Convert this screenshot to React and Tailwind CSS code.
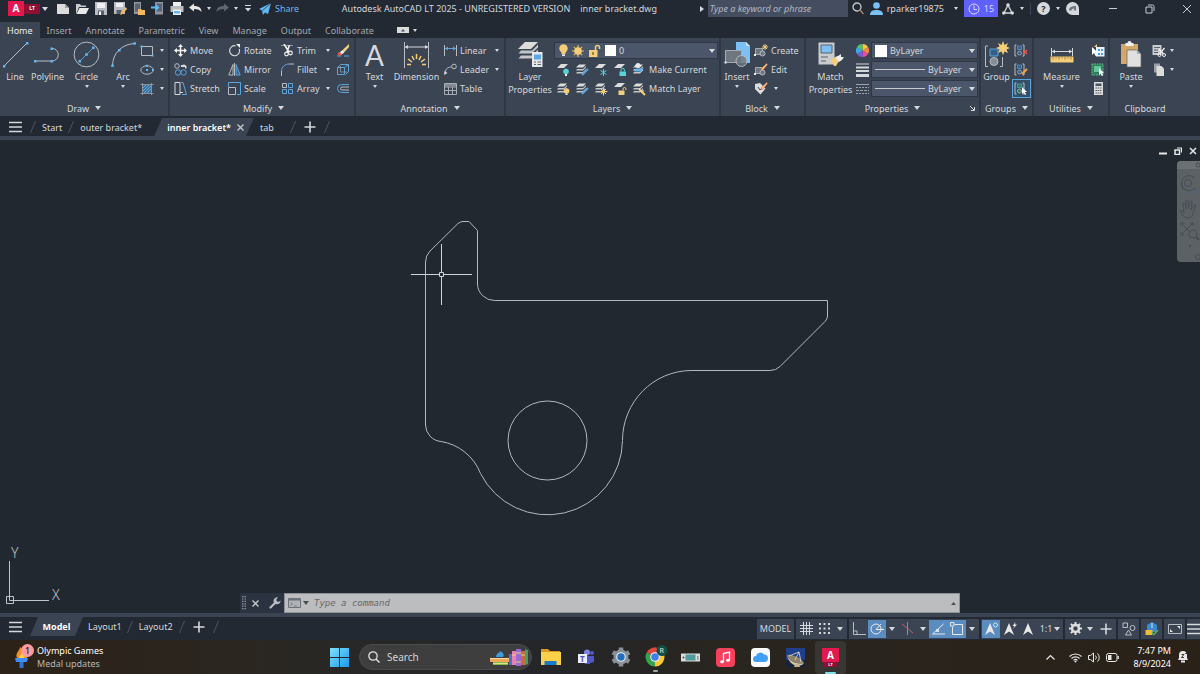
import { useState } from "react";

const Svg = ({ w, h, children, className = "" }) => (
  <svg width={w} height={h} viewBox={`0 0 ${w} ${h}`} fill="none" className={`shrink-0 ${className}`} aria-hidden="true">
    {children}
  </svg>
);

const Caret = ({ className = "" }) => (
  <Svg w={6} h={4} className={className}>
    <path d="M0 0h6L3 4z" fill="#d5d8dc" />
  </Svg>
);

const SmallCaret = ({ className = "" }) => (
  <Svg w={4} h={3} className={className}>
    <path d="M0 0h4L2 3z" fill="#d5d8dc" />
  </Svg>
);

const Slash = () => (
  <Svg w={6} h={14}>
    <path d="M0.5 13L5.5 1" stroke="#4a5462" />
  </Svg>
);

const Plus = () => (
  <Svg w={12} h={12}>
    <path d="M6 0.5v11M0.5 6h11" stroke="#d5d8dc" strokeWidth="1.6" />
  </Svg>
);

const Menu = () => (
  <Svg w={13} h={12}>
    <path d="M0 1.5h13M0 6h13M0 10.5h13" stroke="#d5d8dc" strokeWidth="1.6" />
  </Svg>
);

/* ---------- shared icon pieces ---------- */

const Sheets = ({ children }) => (
  <Svg w={14} h={14}>
    <path d="M4 1.5h7l-3 3H1z" fill="#dcdcda" />
    <path d="M2 6h6l3-3v1.5l-3 3H1zM2 9h6l3-3v1.5l-3 3H1z" fill="#c4c6c8" />
    {children}
  </Svg>
);

const Sheet = ({ children }) => (
  <Svg w={14} h={14}>
    <path d="M5 1h7L8 5H1z" fill="#dcdcda" />
    {children}
  </Svg>
);

const Bulb = ({ color = "#f5cd79" }) => (
  <Svg w={9} h={13}>
    <circle cx="4.5" cy="4.5" r="4.2" fill={color} />
    <path d="M2.5 7h4v3h-4z" fill={color} />
    <path d="M3 10.3h3V12H3z" fill="#e8e8e8" />
  </Svg>
);

const Sun = () => (
  <Svg w={12} h={12}>
    <path d="M6 0v12M0 6h12M1.8 1.8l8.4 8.4M10.2 1.8l-8.4 8.4" stroke="#e9b94f" strokeWidth="1.2" />
    <circle cx="6" cy="6" r="3.8" fill="#f5cd79" />
  </Svg>
);

const Unlock = () => (
  <Svg w={13} h={13}>
    <path d="M7.5 6V3.5a2 2 0 014 0V5" stroke="#f5cd79" strokeWidth="1.5" />
    <path d="M1 6h8.5v7H1z" fill="#f5cd79" />
    <path d="M5 8v3" stroke="#6b5a34" strokeWidth="1.3" />
  </Svg>
);

/* ---------- ribbon icons ---------- */

const LineIcon = () => (
  <Svg w={27} h={27}>
    <path d="M2 25L25 2" stroke="#b9bdc3" />
    <path d="M1 24h2.4v2.4H1zM24 1h2.4v2.4H24z" fill="#62b8f5" />
  </Svg>
);
const PolylineIcon = () => (
  <Svg w={27} h={27}>
    <path d="M1 20h17a6.3 6.3 0 000-12.6" stroke="#b9bdc3" />
    <path d="M0 19h2.4v2.4H0zM16.5 19h2.4v2.4h-2.4zM16.5 6.5h2.4v2.4h-2.4z" fill="#62b8f5" />
  </Svg>
);
const CircleIcon = () => (
  <Svg w={27} h={27}>
    <circle cx="13.5" cy="13.5" r="12.4" stroke="#b9bdc3" />
    <path d="M7 20L20 7" stroke="#4f9ed8" />
    <path d="M5.5 19h2.6v2.6H5.5zM12.2 12.2h2.6v2.6h-2.6zM19 5.5h2.6v2.6H19z" fill="#62b8f5" />
  </Svg>
);
const ArcIcon = () => (
  <Svg w={27} h={27}>
    <path d="M2.5 25C2.5 12 12 3 25 2.5" stroke="#b9bdc3" />
    <path d="M1.3 23.5h2.4v2.4H1.3zM8 8h2.6v2.6H8zM23.5 1.3h2.4v2.4h-2.4z" fill="#62b8f5" />
  </Svg>
);
const RectIcon = () => (
  <Svg w={14} h={12}>
    <path d="M1.5 1.5h11v9h-11z" stroke="#b9bdc3" />
    <path d="M0.5 0.5h2v2h-2zM11.5 9.5h2v2h-2z" fill="#62b8f5" />
  </Svg>
);
const EllipseIcon = () => (
  <Svg w={14} h={12}>
    <ellipse cx="7" cy="6" rx="6.2" ry="4.2" stroke="#b9bdc3" />
    <path d="M6 5h2v2H6zM12 5h2v2h-2zM6 0.8h2v2H6z" fill="#62b8f5" />
  </Svg>
);
const HatchIcon = () => (
  <Svg w={14} h={12}>
    <path d="M3 2h8v8H3z" fill="#3b6f9c" />
    <path d="M3 5l3-3M3 8l6-6M4 10l7-7M7 10l4-4" stroke="#7ec1f0" strokeWidth="0.7" />
    <path d="M2.5 0v12M11.5 0v12M0.5 1.5h13M0.5 10.5h13" stroke="#9da3ab" strokeWidth="0.8" />
  </Svg>
);

const MoveIcon = () => (
  <Svg w={13} h={13}>
    <path d="M6.5 1v11M1 6.5h11" stroke="#f0f0f0" strokeWidth="1.5" />
    <path d="M6.5 0l2.5 3h-5zM6.5 13l2.5-3h-5zM0 6.5l3-2.5v5zM13 6.5l-3-2.5v5z" fill="#f0f0f0" />
  </Svg>
);
const CopyIcon = () => (
  <Svg w={13} h={13}>
    <circle cx="3" cy="3" r="2.3" stroke="#b9bdc3" />
    <circle cx="4" cy="9.5" r="2.7" stroke="#5aa5dc" />
    <circle cx="9.6" cy="9.5" r="2.7" stroke="#5aa5dc" />
    <path d="M7 2h2.500V1L12.500 3v2.500H11V4H7z" fill="#d5d8dc" />
  </Svg>
);
const StretchIcon = () => (
  <Svg w={13} h={13}>
    <path d="M1 0.5h5v12H1z" stroke="#d5d8dc" />
    <path d="M6 10.5h3" stroke="#d5d8dc" />
    <path d="M7 0.5h2l3.5 12H8" stroke="#5aa5dc" />
  </Svg>
);
const RotateIcon = () => (
  <Svg w={13} h={13}>
    <path d="M7.5 1.8A5 5 0 1011.300 5" stroke="#d5d8dc" strokeWidth="1.2" />
    <path d="M8 0h4v4z" fill="#f0f0f0" />
  </Svg>
);
const MirrorIcon = () => (
  <Svg w={13} h={13}>
    <path d="M5 1.5v10.5H0.8z" stroke="#b9bdc3" />
    <path d="M8 1.5v10.5h4.2z" fill="#2b6a96" stroke="#5aa5dc" />
    <path d="M6.5 0v13" stroke="#d5d8dc" strokeWidth="0.8" />
  </Svg>
);
const ScaleIcon = () => (
  <Svg w={13} h={13}>
    <path d="M0.5 5V0.5h12v12H9" stroke="#5aa5dc" />
    <path d="M0.5 5.5h7v7h-7z" stroke="#b9bdc3" />
  </Svg>
);
const TrimIcon = () => (
  <Svg w={13} h={13}>
    <path d="M0 1.5h13" stroke="#8f96a0" strokeDasharray="3 1.5" />
    <path d="M3 0l5 8M8.5 1L6 8" stroke="#f0f0f0" strokeWidth="1.6" />
    <circle cx="5.5" cy="10" r="1.8" stroke="#f0f0f0" strokeWidth="1.2" />
    <circle cx="9.5" cy="9" r="1.8" stroke="#f0f0f0" strokeWidth="1.2" />
  </Svg>
);
const FilletIcon = () => (
  <Svg w={13} h={13}>
    <path d="M0.5 13V8" stroke="#b9bdc3" />
    <path d="M0.5 8C0.5 4 4 1 8 1" stroke="#5aa5dc" />
    <path d="M8 1h5" stroke="#b9bdc3" />
  </Svg>
);
const ArrayIcon = () => (
  <Svg w={13} h={13}>
    <path d="M7.5 1.5h4v4h-4zM1.5 7.5h4v4h-4zM7.5 7.5h4v4h-4z" stroke="#5aa5dc" />
    <path d="M1.5 1.5h4v4h-4z" stroke="#b9bdc3" />
  </Svg>
);
const EraseIcon = () => (
  <Svg w={14} h={13}>
    <path d="M13 0L5 7.5l2 2L13 3z" fill="#f5d38a" />
    <path d="M6 6.5l2 2L5 11 3 9z" fill="#f0f0f0" />
    <path d="M1 12h4M8 12h5" stroke="#5aa5dc" />
    <circle cx="3.5" cy="10" r="1.8" fill="#e8554d" />
  </Svg>
);
const ExplodeIcon = () => (
  <Svg w={14} h={13}>
    <path d="M1.5 4.5h7v7h-7z" stroke="#5aa5dc" />
    <path d="M1.5 4.5l3-3h8v7l-3 3M12.5 1.5l-4 3" stroke="#5aa5dc" />
    <path d="M4.5 3v6h7" stroke="#9da3ab" strokeWidth="0.7" />
  </Svg>
);
const OffsetIcon = () => (
  <Svg w={14} h={13}>
    <path d="M13 2.5H5.500a4 4 0 000 8H13" stroke="#5aa5dc" />
    <path d="M13 5H6a1.500 1.500 0 000 3h7" stroke="#b9bdc3" />
  </Svg>
);

const DimensionIcon = () => (
  <Svg w={27} h={27}>
    <path d="M1.5 1v26M25.5 1v26" stroke="#b9bdc3" />
    <path d="M2 6h23" stroke="#d5d8dc" />
    <path d="M2 6l3-2v4zM25 6l-3-2v4z" fill="#d5d8dc" />
    <path d="M13.5 13v5M9 15l2 4M18 15l-2 4M5 18l4 3M22 18l-4 3M4 23.5h4M19 23.5h4" stroke="#f5cd79" strokeWidth="1.5" />
  </Svg>
);
const LinearIcon = () => (
  <Svg w={13} h={13}>
    <path d="M0.5 1v11M12.5 1v11" stroke="#b9bdc3" />
    <path d="M1 4.5h11" stroke="#5aa5dc" />
    <path d="M1 4.5l3-2v4zM12 4.5l-3-2v4z" fill="#5aa5dc" />
  </Svg>
);
const LeaderIcon = () => (
  <Svg w={13} h={13}>
    <path d="M1 10c1-5 3-6 6.5-6" stroke="#b9bdc3" />
    <circle cx="10" cy="3.5" r="2.3" stroke="#b9bdc3" />
    <path d="M0 12l0.5-4L3.5 10z" fill="#d5d8dc" />
  </Svg>
);
const TableIcon = () => (
  <Svg w={13} h={12}>
    <path d="M0.5 0.5h12v11h-12zM0.5 4h12M0.5 7.5h12M4.5 4v7.5M8.5 4v7.5" stroke="#a8adb4" />
    <path d="M1 1h11v2.5H1z" fill="#858c96" />
  </Svg>
);
const LayerPropsIcon = () => (
  <Svg w={28} h={27}>
    <path d="M9 1h13l-7 7H2z" fill="#dcdcda" />
    <path d="M5 9.5h11l6-6v3l-6.5 6H2.5zM5 14.5h11l6-6v3l-6.5 6H2.5z" fill="#c4c6c8" />
    <path d="M16 11h10.5v15H16z" fill="#e8e8e8" />
    <path d="M18 13.5h7v5h-7z" fill="#5aa9e6" />
    <path d="M18 21h2M21.5 21H25M18 23.5h2M21.5 23.5H25" stroke="#5b6370" />
  </Svg>
);
const MatchMini = () => (
  <Sheets>
    <path d="M7 7l3 3 1.5-1.5" stroke="#e8e8e8" strokeWidth="1.5" />
    <path d="M8 8l5 5" stroke="#f5cd79" strokeWidth="2" />
  </Sheets>
);
const InsertIcon = () => (
  <Svg w={27} h={27}>
    <path d="M12 1h10l4 4v17H12z" fill="#7cc0f5" />
    <path d="M22 1v4h4z" fill="#c3e1f8" />
    <path d="M1.5 9.5h16v12h-16z" fill="#6f7680" stroke="#a5aab2" />
    <circle cx="17.5" cy="20" r="5.5" fill="#6f7680" fillOpacity="0.8" stroke="#b5bac1" />
    <path d="M0.5 20.5h2v2h-2z" fill="#f0f0f0" />
  </Svg>
);
const BlockMini = ({ children }) => (
  <Svg w={14} h={13}>
    <path d="M1.5 4.5h7v6h-7z" fill="#6f7680" stroke="#a5aab2" />
    <circle cx="8.5" cy="9.5" r="2.5" fill="#6f7680" stroke="#b5bac1" />
    <path d="M0 10h2v2H0z" fill="#f0f0f0" />
    {children}
  </Svg>
);
const Pencil = () => <path d="M12.5 0.5l1 1L9 7l-2 0.5L7.500 5.500z" fill="#f5cd79" stroke="#e8554d" strokeWidth="0.5" />;
const TagIcon = () => (
  <Svg w={14} h={13}>
    <path d="M1 2l5-1 5.5 5.5-5 6L1 7z" fill="#dcdcda" />
    <path d="M4 5l2 3 5-5" stroke="#3b4453" />
    <Pencil />
  </Svg>
);
const MatchPropsIcon = () => (
  <Svg w={27} h={27}>
    <path d="M1.5 1.5h16v22h-16z" fill="#c9cbcd" />
    <path d="M4 4h11v8H4z" fill="#7cc0f5" stroke="#54606e" />
    <path d="M4 16h7M4 20h5" stroke="#54606e" />
    <path d="M14 19l4-3 4 4-3 5h-2z" fill="#f5cd79" />
    <path d="M18 16l3-1 3-2v3h3l-2 3-3 2z" fill="#f0f0f0" />
  </Svg>
);
const WheelIcon = () => (
  <Svg w={13} h={13}>
    <path d="M6.5 6.5V0A6.5 6.5 0 0112.1 3.2z" fill="#f6c945" />
    <path d="M6.5 6.5l5.6-3.3a6.5 6.5 0 010 6.6z" fill="#f08a3c" />
    <path d="M6.5 6.5l5.6 3.3A6.5 6.5 0 016.5 13z" fill="#e0529c" />
    <path d="M6.5 6.5V13A6.5 6.5 0 010.9 9.8z" fill="#7a5be0" />
    <path d="M6.5 6.5L0.9 9.8a6.5 6.5 0 010-6.6z" fill="#3fa9e8" />
    <path d="M6.5 6.5L0.9 3.2A6.5 6.5 0 016.5 0z" fill="#58c06a" />
  </Svg>
);
const WeightIcon = () => (
  <Svg w={13} h={14}>
    <path d="M0 1h13" stroke="#d5d8dc" />
    <path d="M0 4.5h13" stroke="#d5d8dc" strokeWidth="2" />
    <path d="M0 8h13" stroke="#d5d8dc" strokeWidth="2" />
    <path d="M0 12.5h13" stroke="#d5d8dc" strokeWidth="3" />
  </Svg>
);
const LinetypeIcon = () => (
  <Svg w={13} h={13}>
    <path d="M0 2.5h13" stroke="#b9bdc3" strokeWidth="0.8" />
    <path d="M0 5.5h13M0 11.5h13" stroke="#9da3ab" strokeDasharray="2 1" />
    <path d="M0 8.5h13" stroke="#9da3ab" strokeDasharray="3 1" />
  </Svg>
);
const GroupIcon = () => (
  <Svg w={26} h={27}>
    <path d="M4 5H1.5v20.5H4M16 25.5h2.5V16" stroke="#b9bdc3" />
    <path d="M6 8h8v7H6z" fill="#33608a" stroke="#5aa5dc" />
    <circle cx="10" cy="20.5" r="4" fill="#858c96" stroke="#b9bdc3" />
    <path d="M19 0l1.500 4L24 2l-1.500 3.500L26 7l-3.500 1.500L24 12l-3.500-1.500L19 14l-1.500-3.500L14 12l1.500-3.500L12 7l3.500-1.500L14 2l3.500 2z" fill="#f5cd79" />
  </Svg>
);
const GroupMini = ({ color = "#33608a", children }) => (
  <Svg w={14} h={13}>
    <path d="M2.5 1H1v11h1.5M8.5 1H10v11H8.5" stroke="#b9bdc3" />
    <path d="M3.5 2h4v3.500h-4z" fill={color} stroke="#5aa5dc" strokeWidth="0.7" />
    <circle cx="5.5" cy="9" r="2" fill={color} stroke="#b9bdc3" strokeWidth="0.7" />
    {children}
  </Svg>
);
const MeasureIcon = () => (
  <Svg w={24} h={27}>
    <path d="M1.5 7v8M22.5 7v8M2 10.5h20" stroke="#d5d8dc" />
    <path d="M2 10.5l3-2v4zM22 10.5l-3-2v4z" fill="#d5d8dc" />
    <path d="M0.5 15.500h23v6h-23z" fill="#f5cd79" />
    <path d="M3 15.500v3M6 15.500v2M9 15.500v3M12 15.500v2M15 15.500v3M18 15.500v2M21 15.500v3" stroke="#8b6e35" strokeWidth="0.8" />
  </Svg>
);
const SelectIcon = () => (
  <Svg w={14} h={13}>
    <path d="M5 3h8.500v9.500H5z" fill="#e8f1f8" />
    <path d="M7 5h2v2H7zM10 5h2v2h-2zM7 9h2v2H7zM10 9h2v2h-2z" fill="#4a9fe0" />
    <path d="M1 3v8l2-2 1.500 3 1.500-0.800-1.500-2.500H7z" fill="#fff" />
    <path d="M6 0L3 3h3z" fill="#f5cd79" />
  </Svg>
);
const SelectAllIcon = () => (
  <Svg w={14} h={13}>
    <path d="M1 1h11v11H1z" fill="#2e7d58" stroke="#67c498" strokeDasharray="1.5 1" />
    <path d="M3 3h7v6H3z" fill="#67c498" />
    <path d="M8 5v7l1.600-1.500 1.300 2.500 1.300-0.700-1.300-2.400h2.100z" fill="#fff" />
  </Svg>
);
const CalcIcon = () => (
  <Svg w={11} h={13}>
    <path d="M1 0h9v13H1z" fill="#dcdcda" />
    <path d="M2.5 1.5h6v2.5h-6z" fill="#4a5462" />
    <path d="M2.5 6h6M2.5 8.5h6M2.5 11h6" stroke="#4a5462" strokeDasharray="1.5 0.7" />
  </Svg>
);
const PasteIcon = () => (
  <Svg w={22} h={27}>
    <path d="M1 3h17v20H1z" fill="#d4a66a" />
    <path d="M5.5 2h2a2 2 0 014 0h2v3h-8z" fill="#f0f0f0" />
    <path d="M7 9h10l4 4v13H7z" fill="#dfe0e0" stroke="#6b6258" strokeWidth="0.7" />
    <path d="M17 9v4h4z" fill="#a5aab2" />
  </Svg>
);
const CutIcon = () => (
  <Svg w={14} h={13}>
    <path d="M0.5 1h9v10h-9z" fill="#c9cbcd" />
    <path d="M2 3.5h6M2 6h4M2 8.5h4" stroke="#5b6370" />
    <path d="M12.5 4L8 9.500M7 5l4.500 5" stroke="#f0f0f0" strokeWidth="1.3" />
    <circle cx="7.5" cy="11" r="1.5" stroke="#f0f0f0" />
    <circle cx="12" cy="11" r="1.5" stroke="#f0f0f0" />
  </Svg>
);
const ClipCopyIcon = () => (
  <Svg w={14} h={13}>
    <path d="M2 0.5h6v9H2z" fill="#9ba0a8" />
    <path d="M4.5 3h5l2.5 2.5V13H4.500z" fill="#dcdcda" />
  </Svg>
);

/* ---------- ribbon building blocks ---------- */

const Panel = ({ title, className = "", launcher = false, children }) => (
  <section className={`shrink-0 flex flex-col border-r-2 border-[#2f3744] ${className}`}>
    <div className="flex h-[60px] pt-[3px]">{children}</div>
    <div className="relative h-[18px] flex items-center justify-center gap-1.5 pt-0.5">
      <span>{title}</span>
      <Caret />
      {launcher && (
        <Svg w={5} h={5} className="absolute right-1 top-2">
          <path d="M0 0l4 4M4.5 1v3.5H1" stroke="#d5d8dc" />
        </Svg>
      )}
    </div>
  </section>
);

const BigButton = ({ icon, label, caret, className = "" }) => (
  <button className={`shrink-0 flex flex-col items-center h-[57px] whitespace-pre-line ${className}`}>
    <span className="h-[29px] flex items-start justify-center">{icon}</span>
    <span className="leading-[13px] text-center">{label}</span>
    {caret && <SmallCaret className="mt-0.5" />}
  </button>
);

const Tool = ({ icon, label, caret, title, className = "" }) => (
  <button aria-label={label || title} className={`h-[19px] flex items-center gap-[3px] ${className}`}>
    <span className="w-[14px] flex justify-center">{icon}</span>
    {label && <span>{label}</span>}
    {caret && <SmallCaret className="ml-auto" />}
  </button>
);

const Combo = ({ label, value, icons, className = "" }) => (
  <label className={`relative flex items-center h-[17px] bg-[#4b566a] border border-[#2f3744] ${className}`}>
    {icons}
    <select aria-label={label} className="appearance-none bg-transparent flex-1 min-w-0 h-full pl-[3px] outline-none">
      <option>{value}</option>
    </select>
    <Caret className="absolute right-0.5 top-1.5 pointer-events-none" />
  </label>
);

const Ribbon = () => (
  <div className="flex bg-[#3b4453] h-[78px]">
    <Panel title="Draw" className="w-[170px]">
      <BigButton icon={<LineIcon />} label="Line" className="w-[30px]" />
      <BigButton icon={<PolylineIcon />} label="Polyline" className="w-[35px]" />
      <BigButton icon={<CircleIcon />} label="Circle" caret className="w-[43px]" />
      <BigButton icon={<ArcIcon />} label="Arc" caret className="w-[30px]" />
      <div className="flex flex-col w-[24px] ml-0.5">
        <Tool icon={<RectIcon />} title="Rectangle" caret />
        <Tool icon={<EllipseIcon />} title="Ellipse" caret />
        <Tool icon={<HatchIcon />} title="Hatch" caret />
      </div>
    </Panel>

    <Panel title="Modify" className="w-[186px] pl-[3px]">
      <div className="w-[54px]">
        <Tool icon={<MoveIcon />} label="Move" />
        <Tool icon={<CopyIcon />} label="Copy" />
        <Tool icon={<StretchIcon />} label="Stretch" />
      </div>
      <div className="w-[53px]">
        <Tool icon={<RotateIcon />} label="Rotate" />
        <Tool icon={<MirrorIcon />} label="Mirror" />
        <Tool icon={<ScaleIcon />} label="Scale" />
      </div>
      <div className="w-[50px]">
        <Tool icon={<TrimIcon />} label="Trim" caret className="w-full" />
        <Tool icon={<FilletIcon />} label="Fillet" caret className="w-full" />
        <Tool icon={<ArrayIcon />} label="Array" caret className="w-full" />
      </div>
      <div className="ml-1.5">
        <Tool icon={<EraseIcon />} title="Erase" />
        <Tool icon={<ExplodeIcon />} title="Explode" />
        <Tool icon={<OffsetIcon />} title="Offset" />
      </div>
    </Panel>

    <Panel title="Annotation" className="w-[150px]">
      <BigButton
        icon={<span className="font-['Lato',sans-serif] text-[28px] leading-[29px]">A</span>}
        label="Text"
        caret
        className="w-[37px]"
      />
      <BigButton icon={<DimensionIcon />} label="Dimension" className="w-[47px]" />
      <div className="w-[56px] ml-[3px]">
        <Tool icon={<LinearIcon />} label="Linear" caret className="w-full" />
        <Tool icon={<LeaderIcon />} label="Leader" caret className="w-full" />
        <Tool icon={<TableIcon />} label="Table" />
      </div>
    </Panel>

    <Panel title="Layers" className="w-[215px]">
      <BigButton icon={<LayerPropsIcon />} label={"Layer\nProperties"} className="w-[48px]" />
      <div className="w-[164px]">
        <div className="h-[19px] flex items-center">
          <Combo
            label="Layer"
            value="0"
            className="w-full"
            icons={
              <span className="flex items-center gap-1 pl-1">
                <Bulb />
                <Sun />
                <Unlock />
                <span className="w-[11px] h-[11px] bg-white" />
              </span>
            }
          />
        </div>
        <div className="flex gap-[5px] pl-0.5">
          <Tool title="Off" icon={<Sheet><circle cx="10" cy="8.5" r="2.8" fill="#58d3d8" /><path d="M9 11h2v2H9z" fill="#eee" /></Sheet>} />
          <Tool title="Isolate" icon={<Sheets><path d="M7 12l6-6" stroke="#5aa5dc" strokeWidth="2" /></Sheets>} />
          <Tool title="Freeze" icon={<Sheet><path d="M9.5 6v7M6.5 7.5l6 4M12.5 7.5l-6 4" stroke="#58d3d8" /></Sheet>} />
          <Tool title="Lock" icon={<Sheet><path d="M6.5 8.5h6.5V13H6.500z" fill="#58d3d8" /><path d="M8 8.5V7a1.700 1.700 0 013.400 0v1.500" stroke="#58d3d8" /></Sheet>} />
          <Tool
            icon={<Sheets><circle cx="6" cy="2.5" r="2.5" fill="#e8e8e8" /><path d="M4 5.500h8l-3 3H2z" fill="#62b8f5" /></Sheets>}
            label="Make Current"
          />
        </div>
        <div className="flex gap-[5px] pl-0.5">
          <Tool title="Turn All On" icon={<Sheets><circle cx="10.5" cy="9" r="2.8" fill="#f5cd79" /><path d="M9.5 11.5h2V13h-2z" fill="#eee" /></Sheets>} />
          <Tool title="Unisolate" icon={<Sheets><path d="M7 12l6-6" stroke="#5aa5dc" strokeWidth="2" /></Sheets>} />
          <Tool title="Thaw All" icon={<Sheets><path d="M9.5 5.5v8M5.5 9.5h8M7 7l5 5M12 7l-5 5" stroke="#f5cd79" /><circle cx="9.5" cy="9.5" r="2" fill="#f5cd79" /></Sheets>} />
          <Tool title="Unlock" icon={<Sheet><path d="M5.5 8.5h6V13h-6z" fill="#f5cd79" /><path d="M10 8.5V7a1.500 1.500 0 013 0v1" stroke="#f5cd79" /></Sheet>} />
          <Tool icon={<MatchMini />} label="Match Layer" />
        </div>
      </div>
    </Panel>

    <Panel title="Block" className="w-[85px]">
      <BigButton icon={<InsertIcon />} label="Insert" caret className="w-[32px]" />
      <div className="ml-px">
        <Tool icon={<BlockMini><path d="M11 0v6M8 3h6M9 1l4 4M13 1l-4 4" stroke="#f5cd79" /></BlockMini>} label="Create" />
        <Tool icon={<BlockMini><Pencil /></BlockMini>} label="Edit" />
        <Tool icon={<TagIcon />} title="Edit Attributes" caret className="w-[24px]" />
      </div>
    </Panel>

    <Panel title="Properties" launcher className="w-[175px]">
      <BigButton icon={<MatchPropsIcon />} label={"Match\nProperties"} className="w-[49px]" />
      <div className="w-[16px]">
        <Tool icon={<WheelIcon />} title="Object color" />
        <Tool icon={<WeightIcon />} title="Lineweight" />
        <Tool icon={<LinetypeIcon />} title="Linetype" />
      </div>
      <div className="flex flex-col gap-0.5 w-[107px] pt-px">
        <Combo label="Color" value="ByLayer" icons={<span className="w-[12px] h-[12px] bg-white ml-[3px]" />} />
        <Combo label="Lineweight list" value="ByLayer" icons={<span className="w-[50px] h-px bg-[#c9cbcd] ml-[3px]" />} />
        <Combo label="Linetype list" value="ByLayer" icons={<span className="w-[50px] h-px bg-[#c9cbcd] ml-[3px]" />} />
      </div>
    </Panel>

    <Panel title="Groups" className="w-[53px]">
      <BigButton icon={<GroupIcon />} label="Group" className="w-[31px]" />
      <div className="w-[19px]">
        <Tool icon={<GroupMini><path d="M9 6l4 4M13 6l-4 4" stroke="#e8554d" strokeWidth="1.5" /></GroupMini>} title="Ungroup" className="px-0.5" />
        <Tool icon={<GroupMini><path d="M8 11l5-5" stroke="#f5a545" strokeWidth="2" /></GroupMini>} title="Group Edit" className="px-0.5" />
        <Tool
          icon={<GroupMini color="#2e7d58"><path d="M8 5v7l1.600-1.500 1.300 2.500 1.300-0.700-1.300-2.400h2.100z" fill="#fff" /></GroupMini>}
          title="Group Selection"
          className="px-px w-[19px] bg-[#33506b] border border-[#5aa5dc]"
        />
      </div>
    </Panel>

    <Panel title="Utilities" className="w-[76px]">
      <BigButton icon={<MeasureIcon />} label="Measure" caret className="w-[55px]" />
      <div className="ml-0.5">
        <Tool icon={<SelectIcon />} title="Quick Select" />
        <Tool icon={<SelectAllIcon />} title="Select All" />
        <Tool icon={<CalcIcon />} title="Calculator" />
      </div>
    </Panel>

    <section className="flex-1 flex flex-col">
      <div className="flex h-[60px] pt-[3px]">
        <BigButton icon={<PasteIcon />} label="Paste" caret className="w-[42px]" />
        <div className="w-[22px]">
          <Tool icon={<CutIcon />} title="Cut" caret className="w-full" />
          <Tool icon={<ClipCopyIcon />} title="Copy Clip" caret className="w-full" />
        </div>
      </div>
      <div className="w-[70px] h-[18px] pt-0.5 flex items-center justify-center">Clipboard</div>
    </section>
  </div>
);

/* ---------- title bar ---------- */

const TitleBar = () => (
  <header className="flex items-center h-[17px] bg-[#222933]">
    <div className="flex items-center h-full pl-2">
      <button aria-label="Application menu" className="flex items-center h-[15px] text-white font-bold">
        <span className="w-[16px] h-[15px] flex items-center justify-center bg-[#e5174f] text-[10px]">A</span>
        <span className="w-[16px] h-[10px] flex items-center justify-center bg-[#8d0f33] text-[5px]">LT</span>
      </button>
      <Caret className="ml-0.5" />
      <div className="flex items-center gap-[5px] ml-2">
        <button aria-label="New">
          <Svg w={14} h={13}><path d="M1 2h8l4 4v6H1z" fill="#dcdcda" /><path d="M9 2v4h4z" fill="#9ba0a8" /></Svg>
        </button>
        <button aria-label="Open">
          <Svg w={14} h={13}><path d="M1 2h4l1 1.5h5V5H4l-2 5-1 2z" fill="#c9cbcd" /><path d="M4.5 6H14l-3 6H1.500z" fill="#e8e8e8" /></Svg>
        </button>
        <button aria-label="Save">
          <Svg w={14} h={13}><path d="M1 0h12v13H1z" fill="#b9bdc3" /><path d="M3 1h8v5H3z" fill="#f0f0f0" /><path d="M4 8.5h6V13H4z" fill="#54606e" /><path d="M5 9.5h2V13H5z" fill="#fff" /></Svg>
        </button>
        <button aria-label="Save As">
          <Svg w={14} h={13}><path d="M1 0h11v12H1z" fill="#b9bdc3" /><path d="M3 1h7v4H3z" fill="#f0f0f0" /><path d="M3.5 8h5v4h-5z" fill="#54606e" /><path d="M13 5L8 10.500 7 13l2.500-1L14 7z" fill="#f5b95a" /></Svg>
        </button>
        <button aria-label="Open from mobile">
          <Svg w={14} h={13}><path d="M2 0h7v12H2z" fill="#8f96a0" /><path d="M3 1.5h5v8H3z" fill="#5b6370" /><path d="M6 7h3l1 1h3v5H6z" fill="#f5b95a" /></Svg>
        </button>
        <button aria-label="Save to mobile">
          <Svg w={14} h={13}><path d="M4 0h8v12.500H4z" fill="#8f96a0" /><path d="M5 1.5h6v8H5z" fill="#5b6370" /><path d="M0 4.500h5V2l3.500 3.500L5 9V6.500H0z" fill="#62b8f5" /></Svg>
        </button>
        <button aria-label="Plot">
          <Svg w={14} h={13}><path d="M3 0h8v4H3z" fill="#f0f0f0" /><path d="M0.5 4h13v6h-13z" fill="#b9bdc3" /><path d="M3 7.5h8V13H3z" fill="#f0f0f0" /><path d="M4 9h6v2.500H4z" fill="#62b8f5" /></Svg>
        </button>
        <button aria-label="Undo" className="flex items-center gap-[5px]">
          <Svg w={13} h={11}><path d="M0 4.500L5 0.500v2.500c5 0 7.500 2 7.500 6C11 7 9 6 5 6v2.500z" fill="#e8e8e8" /></Svg>
          <SmallCaret />
        </button>
        <button aria-label="Redo" className="flex items-center gap-[5px]">
          <Svg w={13} h={11}><path d="M13 4.500L8 0.500v2.500c-5 0-7.500 2-7.500 6C2 7 4 6 8 6v2.500z" fill="#5d6672" /></Svg>
          <SmallCaret />
        </button>
        <button aria-label="Customize toolbar" className="ml-0.5">
          <Svg w={6} h={7}><path d="M0 0.500h6" stroke="#d5d8dc" /><path d="M0 3h6L3 6.500z" fill="#d5d8dc" /></Svg>
        </button>
      </div>
      <button className="flex items-center gap-1 ml-2 text-[#6cb4e8]">
        <Svg w={12} h={12}><path d="M12 0L0 6l3 1.500L4 12l2-2.500 3 1.500z" fill="#62b8f5" /><path d="M12 0L3.500 7.500" stroke="#222933" strokeWidth="0.7" /></Svg>
        Share
      </button>
    </div>

    <div className="flex-1 flex justify-center gap-2.5 whitespace-nowrap">
      <span>Autodesk AutoCAD LT 2025 - UNREGISTERED VERSION</span>
      <span>inner bracket.dwg</span>
    </div>

    <div className="flex items-center h-full">
      <Svg w={4} h={6}><path d="M0 0v6l4-3z" fill="#d5d8dc" /></Svg>
      <input
        aria-label="Search help"
        placeholder="Type a keyword or phrase"
        className="w-[140px] h-full ml-1 px-0.5 bg-[#454d60] italic placeholder:text-[#b4b8c0] outline-none"
      />
      <button aria-label="Search" className="ml-1">
        <Svg w={12} h={13}><circle cx="5" cy="5" r="4" stroke="#c9cbcd" strokeWidth="1.3" /><path d="M8 8l3.500 4" stroke="#a5825b" strokeWidth="1.5" /></Svg>
      </button>
      <button className="flex items-center gap-1 ml-1.5">
        <Svg w={13} h={13}><circle cx="6.5" cy="3.5" r="3.3" fill="#7cc0f5" /><path d="M0 13c0-4 3-5 6.500-5s6.500 1 6.500 5z" fill="#7cc0f5" /></Svg>
        rparker19875
        <SmallCaret className="ml-1.5" />
      </button>
      <button className="flex items-center justify-center gap-1 h-full w-[34px] ml-1.5 bg-[#5f60ff] text-[#dadcff]">
        <Svg w={12} h={12}><circle cx="6" cy="6" r="5" stroke="#dadcff" /><path d="M6 2.500V6.500h3" stroke="#dadcff" /></Svg>
        15
      </button>
      <button aria-label="Apps" className="flex items-center gap-1.5 ml-1">
        <Svg w={12} h={12}><path d="M6 2L2 10h8z" stroke="#d5d8dc" strokeWidth="1.3" /><circle cx="6" cy="2" r="1.8" fill="#d5d8dc" /><circle cx="1.8" cy="10" r="1.8" fill="#d5d8dc" /><circle cx="10.2" cy="10" r="1.8" fill="#d5d8dc" /></Svg>
        <SmallCaret />
      </button>
      <span className="w-px h-3 bg-[#3b4453] mx-1.5" />
      <button aria-label="Help" className="flex items-center gap-1.5">
        <span className="w-[13px] h-[13px] rounded-full bg-[#d5d8dc] text-[#222933] font-bold leading-[13px]">?</span>
        <SmallCaret />
      </button>
      <button aria-label="Autodesk assistant" className="ml-1.5">
        <Svg w={13} h={13}><path d="M6.500 0a6.500 6.500 0 016.500 6.500V13H6.500a6.500 6.500 0 010-13z" fill="#d5d8dc" /><path d="M3 8.500C3 5 6 4 10 4v4.500H8V6.500C7 6.500 6 7 5.500 8.500z" fill="#6f7680" /></Svg>
      </button>
      <div className="flex items-center gap-[27px] ml-[29px] mr-2">
        <button aria-label="Minimize"><Svg w={10} h={10}><path d="M1 4.500h8" stroke="#c9cbcd" /></Svg></button>
        <button aria-label="Restore"><Svg w={10} h={10}><path d="M1 3h6v6H1z" stroke="#c9cbcd" /><path d="M3 1h4.500a1.500 1.500 0 011.500 1.500V7" stroke="#c9cbcd" /></Svg></button>
        <button aria-label="Close"><Svg w={10} h={10}><path d="M1 1l8 8M9 1L1 9" stroke="#c9cbcd" /></Svg></button>
      </div>
    </div>
  </header>
);

const ribbonTabs = ["Home", "Insert", "Annotate", "Parametric", "View", "Manage", "Output", "Collaborate"];

const RibbonTabs = () => {
  const [active, setActive] = useState("Home");
  return (
    <nav className="flex items-end h-[21px] bg-[#222933]">
      {ribbonTabs.map((tab) => (
        <button
          key={tab}
          onClick={() => setActive(tab)}
          className={`h-4 px-[7px] ${active === tab ? "bg-[#3b4453] text-[#eceef0]" : "text-[#a3a8b0]"}`}
        >
          {tab}
        </button>
      ))}
      <button aria-label="Ribbon display" className="flex items-center gap-1 h-4 ml-4">
        <Svg w={12} h={6}><path d="M0 0h12v6H0z" fill="#dcdcda" /><path d="M4 4.500h4L6 2z" fill="#4a5462" /></Svg>
        <SmallCaret />
      </button>
    </nav>
  );
};

const slant = "[clip-path:polygon(8px_0,100%_0,calc(100%_-_8px)_100%,0_100%)]";

const FileTabs = () => (
  <nav className="flex items-end h-6 bg-[#222933] border-b-4 border-[#3b4453]">
    <div className="flex items-center h-[18px]">
      <button aria-label="File tab menu" className="ml-[9px] mr-2"><Menu /></button>
      <Slash />
      <button className="px-1.5">Start</button>
      <Slash />
      <button className="px-1.5 mr-1.5">outer bracket*</button>
      <div className={`flex items-center gap-1.5 h-full pl-[13px] pr-2.5 bg-[#3b4453] ${slant}`}>
        <button className="font-semibold text-white">inner bracket*</button>
        <button aria-label="Close tab">
          <Svg w={7} h={7}><path d="M0.500 0.500l6 6M6.500 0.500l-6 6" stroke="#c9cbcd" strokeWidth="1.3" /></Svg>
        </button>
      </div>
      <button className="pl-1.5 pr-4">tab</button>
      <Slash />
      <button aria-label="New tab" className="mx-2"><Plus /></button>
      <Slash />
    </div>
  </nav>
);

/* ---------- drawing area ---------- */

const Drawing = () => (
  <svg viewBox="0 140 1200 473" className="absolute inset-0 w-full h-full" fill="none" stroke="#b4b7bb" aria-label="inner bracket drawing">
    <path d="M425.5 262A16 16 0 01430 251L457.500 224Q460 221.500 463 221.500H469L477.500 230.500V284A17 17 0 00494.500 300.500H827.500V316Q827.500 319 825 321.500L780 366.500Q776 370.500 770 370.500H691A69 70 0 00622.500 440.500A75 75 0 01480.500 473.500A51 51 0 00441 441.500A17 17 0 01425.500 425Z" />
    <circle cx="547.5" cy="440.5" r="39.5" />
    <path d="M411 274.500h28M444 274.500h28M441.500 244v28M441.500 277v28" stroke="#d0d2d5" />
    <path d="M439.500 272.500h4v4h-4z" stroke="#d0d2d5" />
  </svg>
);

const Canvas = () => (
  <main className="relative flex-1 min-h-[440px] flex flex-col justify-between bg-[#212830]">
    <Drawing />

    <div className="relative flex justify-end items-center gap-[7px] h-[22px] pr-[3px]">
      <button aria-label="Minimize drawing"><Svg w={8} h={8}><path d="M0 6.500h8" stroke="#e8e8e8" strokeWidth="2" /></Svg></button>
      <button aria-label="Restore drawing"><Svg w={8} h={8}><path d="M1 3h4.500v4.500H1z" stroke="#e8e8e8" strokeWidth="1.5" /><path d="M3 1h4.500v4.500" stroke="#e8e8e8" strokeWidth="1.2" /></Svg></button>
      <button aria-label="Close drawing"><Svg w={8} h={8}><path d="M1 1l6 6M7 1L1 7" stroke="#e8e8e8" strokeWidth="1.5" /></Svg></button>
    </div>

    <div className="absolute right-0 top-[21px] w-[23px] h-[101px] rounded-l-sm bg-[#5c6166] overflow-hidden">
      <Svg w={23} h={101}>
        <path d="M0 0h23v8H0z" fill="#6b7075" />
        <g stroke="#474d54">
          <circle cx="21" cy="4" r="2" />
          <path d="M18.500 26a7.500 7.500 0 11-1-9M4 22a7 7 0 007 7.500" />
          <circle cx="11" cy="22" r="3.5" />
          <path d="M6.500 55L3 50.500c0-1.500 1.500-1.500 2.500 0L7 52l-1-9c0-1.500 2-1.500 2 0l1 5V40c0-1.500 2-1.500 2 0l0.500 8 1.500-7c0.500-1.500 2-1 2 0l-1 8 3-5c1-1 2-0.500 1.500 1L15 55c-1 2.500-7 2.500-8.500 0z" />
          <path d="M4 62l12 12M16 62L4 74M4 65v-3h3M13 62h3v3M4 71v3h3" />
          <circle cx="16" cy="73" r="4" fill="#5c6166" />
          <path d="M19 76l3 3" strokeWidth="2" />
          <circle cx="21" cy="96" r="2.5" />
        </g>
        <path d="M11 84h4l-2 2.500z" fill="#474d54" />
        <text x="13" y="32" fontSize="6" fill="#46617e">2D</text>
      </Svg>
    </div>

    <Svg w={68} h={68} className="absolute left-0 bottom-0">
      <g stroke="#c0c3c7">
        <path d="M9.500 16v39.500H49" />
        <path d="M6.500 51.500h7v7h-7z" />
      </g>
      <text x="11" y="13" fontSize="14" fontWeight="300" fill="#c0c3c7">Y</text>
      <text x="52" y="55" fontSize="14" fontWeight="300" fill="#c0c3c7">X</text>
    </Svg>

    <div className="relative flex h-5 ml-[20%] w-[60%] bg-[#2c3340]">
      <div className="flex items-center gap-1.5 w-11 pl-0.5 shrink-0">
        <Svg w={4} h={14}><path d="M0.800 0v14M3.200 0v14" stroke="#a5aab2" strokeWidth="1.2" strokeDasharray="1.2 1.2" /></Svg>
        <button aria-label="Close command line"><Svg w={7} h={7}><path d="M0.500 0.500l6 6M6.500 0.500l-6 6" stroke="#c9cbcd" strokeWidth="1.3" /></Svg></button>
        <button aria-label="Customize command line" className="ml-1">
          <Svg w={12} h={12}><path d="M1.500 10.500L7 5" stroke="#b9bdc3" strokeWidth="2.2" strokeLinecap="round" /><path d="M9 0.500a3.500 3.500 0 102.500 3L9.500 5 7.500 4V2z" fill="#b9bdc3" /></Svg>
        </button>
      </div>
      <div className="flex flex-1 items-center gap-0.5 px-[3px] bg-[#bcbdbf] border border-[#8d9197]">
        <Svg w={13} h={10}><path d="M0.500 0.500h12v9h-12z" fill="#b0b2b5" stroke="#6d7278" /><path d="M1 1.500h11" stroke="#6d7278" strokeWidth="2" /><path d="M2.500 4.500l2 1.500-2 1.500M6 8h3" stroke="#6d7278" strokeWidth="0.8" /></Svg>
        <Svg w={6} h={4}><path d="M0 0h6L3 4z" fill="#4a4e54" /></Svg>
        <input
          aria-label="Command"
          placeholder="Type a command"
          className="flex-1 min-w-0 pl-[3px] bg-transparent italic font-['DejaVu_Sans_Mono',monospace] placeholder:text-[#67696c] outline-none"
        />
        <Svg w={5} h={3}><path d="M0 3h5L2.500 0z" fill="#4a4e54" /></Svg>
      </div>
    </div>
  </main>
);

/* ---------- status bar ---------- */

const Status = ({ label, on, className = "w-[19px]", children }) => (
  <button aria-label={label} className={`h-[18px] flex items-center justify-center ${className} ${on ? "bg-[#5b8cc0]" : ""}`}>
    {children}
  </button>
);

const StatusGroup = ({ children }) => (
  <div className="flex items-center h-5 bg-[#3b4453] px-px">{children}</div>
);

const Anno = ({ children }) => (
  <Svg w={14} h={14}>
    <path d="M6 1l5 12L6 9.500 1 13z" fill="#e8e8e8" />
    {children}
  </Svg>
);

const StatusBar = () => (
  <footer className="flex items-center justify-between h-[27px] bg-[#222933] border-t-4 border-[#3b4453] overflow-hidden">
    <div className="flex items-center h-full pb-1">
      <button aria-label="Layout menu" className="ml-[9px] mr-2"><Menu /></button>
      <button className={`h-[19px] w-[53px] bg-[#3b4453] font-bold text-white ${slant}`}>Model</button>
      <button className="px-[5px]">Layout1</button>
      <Slash />
      <button className="px-1.5">Layout2</button>
      <Slash />
      <button aria-label="New layout" className="mx-2"><Plus /></button>
      <Slash />
    </div>
    <div className="flex items-center gap-0.5 shrink-0">
      <StatusGroup><Status className="w-[35px]">MODEL</Status></StatusGroup>
      <StatusGroup>
        <Status label="Grid" className="w-[18px]"><Svg w={13} h={13}><path d="M3.5 0v13M6.5 0v13M9.5 0v13M0 3.500h13M0 6.500h13M0 9.500h13" stroke="#d5d8dc" /></Svg></Status>
        <Status label="Snap"><Svg w={13} h={13}><path d="M1 2h11M1 6.500h11M1 11h11" stroke="#d5d8dc" strokeWidth="2" strokeDasharray="2 2.5" /></Svg></Status>
        <Status label="Snap menu" className="w-3"><Caret /></Status>
      </StatusGroup>
      <StatusGroup>
        <Status label="Ortho" className="w-[18px]"><Svg w={14} h={14}><path d="M1.500 0v12.500H14M1.500 9h3.500v3.500" stroke="#b9bdc3" /></Svg></Status>
        <Status label="Polar tracking" on className="w-[18px]"><Svg w={14} h={14}><circle cx="6" cy="7" r="5" stroke="#e8e8e8" /><path d="M6 7.500h8M6 7.500L11 2" stroke="#e8e8e8" /></Svg></Status>
        <Status label="Polar menu" className="w-3"><Caret /></Status>
        <Status label="Isodraft"><Svg w={13} h={13}><path d="M6.500 0v13" stroke="#6fa387" /><path d="M1 2l11 9" stroke="#b5636b" /></Svg></Status>
        <Status label="Isodraft menu" className="w-3"><Caret /></Status>
        <Status label="Object snap tracking" on className="w-[18px]"><Svg w={14} h={14}><path d="M12.500 2L1.500 12H14" stroke="#e8e8e8" /><path d="M5 7h3v3H5z" fill="#cfe3f5" /></Svg></Status>
        <Status label="Object snap" on><Svg w={14} h={14}><path d="M4.500 2.500h8v10h-10V5" stroke="#e8e8e8" /><path d="M0.500 0.500h3.500v3.500H0.500z" stroke="#e8e8e8" /></Svg></Status>
        <Status label="Snap modes" className="w-3"><Caret /></Status>
      </StatusGroup>
      <StatusGroup>
        <Status label="Annotation visibility" on className="w-[18px]"><Anno><circle cx="11.5" cy="3" r="2" stroke="#cfe3f5" /></Anno></Status>
        <Status label="Auto scale"><Anno><path d="M12.500 0l-3 4h2L10 7l4-4.500h-2z" fill="#e8e8e8" /></Anno></Status>
        <Status label="Annotation scale icon"><Anno /></Status>
        <Status className="w-[24px] gap-0.5 whitespace-nowrap">1:1 <Caret /></Status>
      </StatusGroup>
      <StatusGroup>
        <Status label="Workspace" className="w-[18px]">
          <Svg w={13} h={13}><circle cx="6.5" cy="6.5" r="3.5" stroke="#e0e0e0" strokeWidth="2.5" /><path d="M6.500 0v2.500M6.500 10.500V13M0 6.500h2.500M10.500 6.500H13M1.900 1.900l1.800 1.800M9.300 9.300l1.800 1.800M1.900 11.100l1.800-1.800M9.300 3.700l1.800-1.800" stroke="#e0e0e0" strokeWidth="2" /></Svg>
        </Status>
        <Status label="Workspace menu" className="w-3"><Caret /></Status>
        <Status label="Annotation monitor"><Plus /></Status>
      </StatusGroup>
      <StatusGroup>
        <Status label="Isolate objects"><Svg w={14} h={14}><path d="M1 1h4.500v4.500H1zM6.500 8l3 5h-6z" stroke="#b9bdc3" /><circle cx="10.5" cy="6" r="2.5" stroke="#b9bdc3" /></Svg></Status>
      </StatusGroup>
      <StatusGroup>
        <Status label="Graphics performance"><Svg w={14} h={14}><path d="M2 3l5-3 5 3v7H2z" fill="#3a8ad0" /><path d="M7 1v5" stroke="#cfe3f5" /><path d="M0.500 8h7v5h-7z" fill="#f5b93a" /><path d="M7 10.500l2 2 4-4.500" stroke="#4fae62" strokeWidth="1.5" /></Svg></Status>
      </StatusGroup>
      <StatusGroup>
        <Status label="Clean screen"><Svg w={14} h={12}><path d="M0.500 1.500h13v9h-13z" stroke="#b9bdc3" /><path d="M9 3h3v3zM2 6v3h3z" fill="#e8e8e8" /></Svg></Status>
      </StatusGroup>
      <StatusGroup>
        <Status label="Customization" className="w-[11px]"><Menu /></Status>
      </StatusGroup>
    </div>
  </footer>
);

/* ---------- windows taskbar ---------- */

const TaskIcon = ({ label, running, children }) => (
  <button aria-label={label} className="relative w-[31px] h-full flex items-center justify-center">
    {children}
    {running && <span className="absolute bottom-0.5 w-[5px] h-0.5 rounded bg-[#a5a5a3]" />}
  </button>
);

const Taskbar = () => (
  <footer className="flex items-center h-[34px] text-white bg-[linear-gradient(90deg,#2c2218_0%,#2b2620_20%,#262828_32%,#24262a_45%,#29251f_60%,#2a2219_100%)]">
    <div className="w-[25%] min-w-[110px] flex items-center gap-1 pl-3.5">
      <span className="relative w-[19px] h-[24px] shrink-0">
        <Svg w={19} h={24}>
          <path d="M3 13C1 8 5 7 6 2c3 3 8 6 7 11z" fill="#f58a2a" />
          <path d="M5 13c0-3 3-3 3-6 3 2 3 4 2 6z" fill="#fbd04b" />
          <path d="M1 13h13l-1 4H2z" fill="#3f8df5" />
          <path d="M5.500 17h4v6h-4z" fill="#2b74dc" />
        </Svg>
        <span className="absolute -top-px -right-px w-[13px] h-[13px] rounded-full bg-[#ff9aa2] text-black text-center leading-[13px]">1</span>
      </span>
      <div className="leading-[13px]">
        <div>Olympic Games</div>
        <div className="text-[#b9b6b2]">Medal updates</div>
      </div>
    </div>

    <div className="flex items-center h-full ml-[30px]">
      <button aria-label="Start">
        <Svg w={19} h={19}>
          <defs>
            <linearGradient id="win" x1="0" y1="0" x2="1" y2="1">
              <stop offset="0" stopColor="#7fe0fb" />
              <stop offset="1" stopColor="#189af0" />
            </linearGradient>
          </defs>
          <path d="M0 0h9v9H0zM10 0h9v9h-9zM0 10h9v9H0zM10 10h9v9h-9z" fill="url(#win)" />
        </Svg>
      </button>
      <label className="flex items-center gap-[7px] w-[173px] h-[26px] ml-2.5 pl-2 pr-0.5 rounded-full bg-[#3d3e3d] border border-[#4a4b4a]">
        <Svg w={12} h={12}><circle cx="5" cy="5" r="4.2" stroke="#e0e0e0" strokeWidth="1.3" /><path d="M8 8l3.500 3.500" stroke="#e0e0e0" strokeWidth="1.5" /></Svg>
        <input placeholder="Search" className="flex-1 min-w-0 bg-transparent text-[10px] placeholder:text-[#d5d5d3] outline-none" />
        <Svg w={39} h={20}>
          <path d="M0 11h19v4H0z" fill="#efa65c" />
          <path d="M3 15h15v3H3z" fill="#8ab84a" />
          <path d="M0 11.500h19" stroke="#f5d9a5" />
          <path d="M3 16.500h15" stroke="#d5e58a" />
          <path d="M6 10c0-4 4-4 4-6 2 1 5 3 3 6z" fill="#3f9be0" />
          <path d="M19 7h3v11h-3z" fill="#4a72c8" />
          <path d="M22 4h4v14h-4z" fill="#e87fb5" />
          <path d="M26 2h5v17h-5z" fill="#9a6ad0" />
          <path d="M31 4h4v14h-4z" fill="#c76a3f" />
          <path d="M35 2l3 1v14l-3 1z" fill="#3fa06a" />
          <path d="M22 8h4M26 6h5M31 8h4M26 15h5" stroke="#f5cd79" />
        </Svg>
      </label>
      <div className="flex items-center h-full gap-1 ml-[3px]">
        <TaskIcon label="File Explorer">
          <Svg w={20} h={18}><path d="M0 1h7l2 2h10v4H0z" fill="#d99a1e" /><path d="M0 4h20v13H0z" fill="#fcd049" /><path d="M3.500 17v-4h12v4z" fill="#1e78c8" /></Svg>
        </TaskIcon>
        <TaskIcon label="Teams">
          <Svg w={18} h={18}><circle cx="10" cy="4.5" r="3" fill="#7b83eb" /><circle cx="15" cy="5" r="2" fill="#5059c9" /><path d="M6 8h7v8H8l-2-3zM13 8h4v6l-4 1z" fill="#5059c9" /><path d="M1 6h9v9H1z" fill="#eceefb" /><text x="3" y="13.5" fontSize="8" fontWeight="700" fill="#4b53bc">T</text></Svg>
        </TaskIcon>
        <TaskIcon label="Settings">
          <Svg w={20} h={20}><path d="M10 0.500v19M1.800 5.200l16.400 9.600M1.800 14.800l16.400-9.600" stroke="#8a9099" strokeWidth="4.5" /><circle cx="10" cy="10" r="7.5" fill="#8a9099" /><circle cx="10" cy="10" r="4.8" fill="#e8eef5" /><circle cx="10" cy="10" r="3.7" fill="#1e6fc0" /></Svg>
        </TaskIcon>
        <TaskIcon label="Chrome" running>
          <Svg w={24} h={24}>
            <path d="M11 12V2.500l8.200 4.800A9.500 9.500 0 0111 21.500z" fill="#fbc934" />
            <path d="M11 12v9.500A9.500 9.500 0 012.800 7.300z" fill="#34a350" />
            <path d="M2.800 7.300A9.500 9.500 0 0119.200 7.300L11 12z" fill="#e5463b" />
            <circle cx="11" cy="12" r="4.8" fill="#f5f5f5" />
            <circle cx="11" cy="12" r="3.8" fill="#3f80ee" />
            <circle cx="18" cy="5.5" r="5.5" fill="#0f4f44" />
            <text x="15.5" y="8.2" fontSize="7" fill="#e8e8e8">R</text>
          </Svg>
        </TaskIcon>
        <TaskIcon label="Game">
          <Svg w={19} h={9}><path d="M0 0.500h19v8H0z" fill="#dcdcd8" /><path d="M4.500 1.500h10v6h-10z" fill="#4f9a9c" /><path d="M1.500 4.500h2M2.500 3.500v2M16 4h1.500M16 6h1.500" stroke="#4a4e54" /></Svg>
        </TaskIcon>
        <TaskIcon label="Music">
          <Svg w={19} h={19}><rect width="19" height="19" rx="4" fill="#f9405a" /><path d="M7.500 13.500V5.500l6-1.500v8" stroke="#fff" strokeWidth="1.3" /><ellipse cx="6" cy="13.7" rx="1.9" ry="1.5" fill="#fff" /><ellipse cx="12" cy="12.2" rx="1.9" ry="1.5" fill="#fff" /></Svg>
        </TaskIcon>
        <TaskIcon label="iCloud">
          <Svg w={19} h={19}><rect width="19" height="19" rx="4" fill="#f8fafc" /><path d="M5 14a3 3 0 010-6 4.500 4.500 0 018-1.500A3.800 3.800 0 0114 14z" fill="#3fa0f5" /></Svg>
        </TaskIcon>
        <TaskIcon label="Satellite">
          <Svg w={19} h={19}><path d="M0 0h19v19H0z" fill="#1d3f8c" /><path d="M0 12h19v7H0z" fill="#16233c" /><path d="M1 7c3 7 9 9 17 8l-2 2c-7 2-13-1-15-10z" fill="#d5c4a0" /><path d="M1 7c6-1 14 3 17 8-8 1-14-1-17-8z" fill="#8f8468" /><path d="M3 8L13 4l2 10M13 4l-4 8" stroke="#e8e0cc" strokeWidth="0.8" /><path d="M9 16h4l1 3H8z" fill="#c9b48c" /></Svg>
        </TaskIcon>
        <button aria-label="AutoCAD LT" className="relative w-[31px] h-[33px] flex flex-col items-center justify-center rounded bg-[#383632]">
          <span className="w-[17px] h-[14px] leading-[14px] text-center font-bold text-[10px] bg-[#e5174f]">A</span>
          <span className="w-[15px] h-[5px] leading-[5px] text-center font-bold text-[4px] bg-[#8d0f33]">LT</span>
          <span className="absolute bottom-0 w-[11px] h-0.5 rounded bg-[#84e0e6]" />
        </button>
      </div>
    </div>

    <div className="flex items-center ml-auto mr-[11px]">
      <button aria-label="Hidden icons"><Svg w={9} h={6}><path d="M0.500 5.500l4-4 4 4" stroke="#e8e8e8" strokeWidth="1.2" /></Svg></button>
      <button aria-label="Network, volume and battery" className="flex items-center gap-1.5 ml-3.5">
        <Svg w={13} h={11}><path d="M0.500 4.500a8.500 8.500 0 0112 0M2.500 6.500a5.700 5.700 0 018 0M4.500 8.300a3 3 0 014 0" stroke="#e8e8e8" strokeWidth="1.1" /><circle cx="6.5" cy="9.5" r="1" fill="#e8e8e8" /></Svg>
        <Svg w={12} h={11}><path d="M0.500 3.500h2L5.500 1v9l-3-2.500h-2zM7.500 3.500a3 3 0 010 4M9.500 1.500a5.500 5.500 0 010 8" stroke="#e8e8e8" /></Svg>
        <Svg w={13} h={9}><rect x="0.5" y="0.5" width="10.5" height="8" rx="2" stroke="#e8e8e8" /><path d="M2 2h3.500v5H2z" fill="#e8e8e8" /><path d="M12.200 3v3" stroke="#e8e8e8" strokeWidth="1.3" /></Svg>
      </button>
      <button className="text-right leading-[13px] ml-3.5">
        <span className="block">7:47 PM</span>
        <span className="block">8/9/2024</span>
      </button>
      <button aria-label="Notifications" className="ml-1.5">
        <Svg w={12} h={14}><path d="M1 10l1-2V5a4 4 0 018 0v3l1 2z" fill="#e8e8e8" /><path d="M4 11.500h4" stroke="#e8e8e8" strokeWidth="2" /><path d="M4.500 4.500h2.500l-2.500 3H7M8.500 1h2.500L8.500 3.500H11" stroke="#2a2219" strokeWidth="0.9" /></Svg>
      </button>
    </div>
  </footer>
);

export default function App() {
  return (
    <div className="min-h-screen flex flex-col overflow-hidden bg-[#222933] text-[#d5d8dc] font-['Noto_Sans','Segoe_UI',sans-serif] text-[9px] leading-[13px]">
      <TitleBar />
      <RibbonTabs />
      <Ribbon />
      <FileTabs />
      <Canvas />
      <StatusBar />
      <Taskbar />
    </div>
  );
}
